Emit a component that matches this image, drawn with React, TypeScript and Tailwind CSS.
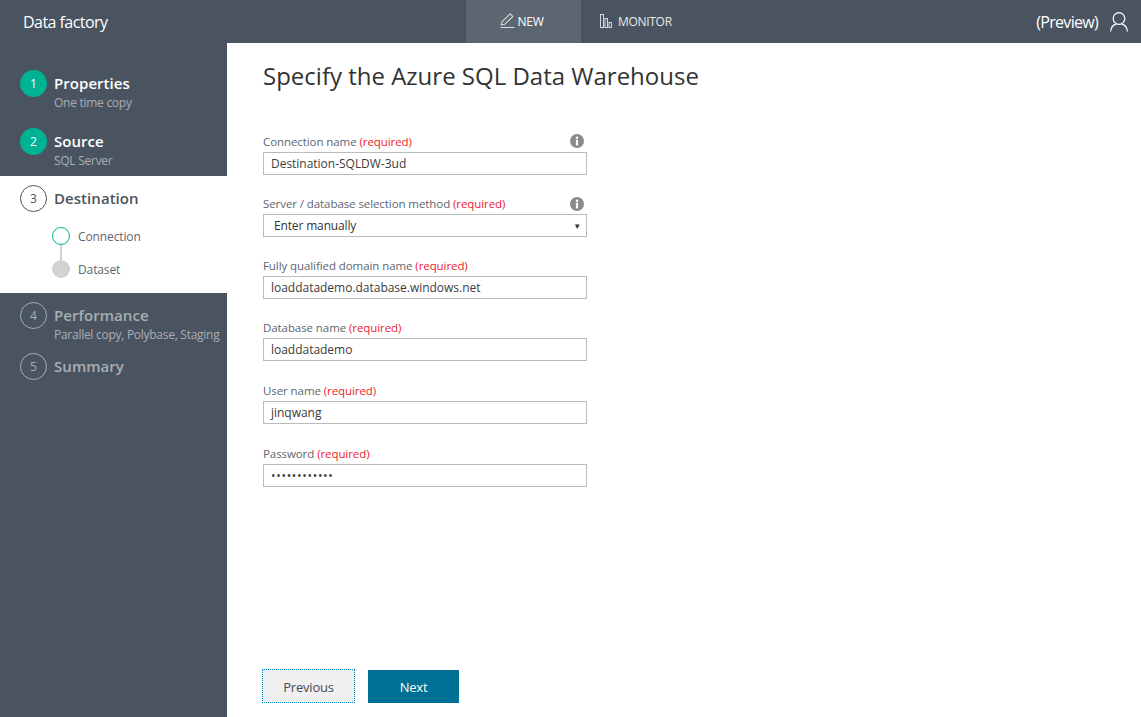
import React from 'react';

const font = { fontFamily: '"Open Sans", "Noto Sans", sans-serif' };

interface StepProps {
    num: number;
    title: string;
    sub?: string;
    state: 'done' | 'active' | 'todo';
    className?: string;
}

const Step: React.FC<StepProps> = ({ num, title, sub, state, className }) => {
    const circle =
        state === 'done'
            ? 'bg-[#00b294] text-white'
            : state === 'active'
              ? 'border border-[#4a5460] text-[#4a5460]'
              : 'border border-[#a9aeb4] text-[#a9aeb4]';
    const titleColor = state === 'done' ? 'text-white' : state === 'active' ? 'text-[#4a5460]' : 'text-[#a9aeb4]';

    return (
        <div className={`flex items-start pl-5 ${className ?? ''}`}>
            <div className={`w-[27px] h-[27px] rounded-full flex items-center justify-center text-[12px] shrink-0 ${circle}`}>
                {num}
            </div>
            <div className="ml-[7px]">
                <div className={`text-[15px] leading-[27px] font-semibold tracking-[0.05px] ${titleColor}`}>{title}</div>
                {sub && <div className="text-[12px] leading-[13px] -mt-[1px] tracking-[-0.27px] whitespace-nowrap text-[#a9aeb4]">{sub}</div>}
            </div>
        </div>
    );
};

const Field: React.FC<{ label: string; info?: boolean; infoClass?: string; className?: string; children: React.ReactNode }> = ({
    label,
    info,
    infoClass,
    className,
    children,
}) => (
    <div className={`w-[324px] ${className ?? ''}`}>
        <div className="flex items-center justify-between h-[20px] pr-[3px]">
            <span className="text-[11.5px] tracking-[-0.08px] text-[#5d6670] whitespace-nowrap">
                {label} <span className="text-[#f01a2e]">(required)</span>
            </span>
            {info && (
                <svg width="14" height="14" viewBox="0 0 14 14" className={infoClass}>
                    <circle cx="7" cy="7" r="7" fill="#8a8a8a" />
                    <circle cx="7" cy="3.7" r="1.3" fill="#fff" />
                    <rect x="5.9" y="5.8" width="2.2" height="5.6" fill="#fff" />
                </svg>
            )}
        </div>
        {children}
    </div>
);

const TextInput: React.FC<{ value: string; className?: string }> = ({ value, className }) => (
    <div className={`h-[23px] border border-[#bbbbbb] pl-[7px] text-[12px] leading-[21px] text-[#3c3c3c] bg-white ${className ?? 'tracking-[-0.02px]'}`}>
        {value}
    </div>
);

export default function App() {
    return (
        <div className="w-[1141px] h-[717px] overflow-hidden flex flex-col bg-white" style={font}>
            {/* Header */}
            <div className="h-[43px] shrink-0 flex bg-[#4a5460] text-white">
                <div className="w-[466px] pl-[23px] text-[16px] leading-[45px] tracking-[-0.55px]">Data factory</div>
                <div className="w-[115px] bg-[#5c6670] flex items-center justify-center text-[12px] tracking-[-0.3px] pr-[4px]">
                    <svg width="15" height="15" viewBox="0 0 14 14" fill="none" stroke="#d5d8db" strokeWidth="1" className="mr-[3px] -mt-[2px]">
                        <path d="M1 11 L2 8 L9.5 0.8 L12 3.2 L4.5 10.5 Z" />
                        <path d="M0.5 13.5 H13.5" />
                    </svg>
                    NEW
                </div>
                <div className="flex items-center pl-[19px] text-[12px] tracking-[-0.3px] text-[#e8eaec]">
                    <svg width="12" height="14" viewBox="0 0 12 14" fill="none" stroke="#d5d8db" strokeWidth="1" className="mr-[6px] -mt-[2px]">
                        <rect x="0.5" y="0.5" width="3" height="13" />
                        <rect x="5" y="4.5" width="2.5" height="9" />
                        <rect x="9" y="8.5" width="2.5" height="5" />
                    </svg>
                    MONITOR
                </div>
                <div className="ml-auto flex items-center pr-[12px]">
                    <span className="text-[16px] tracking-[-0.7px]">(Preview)</span>
                    <svg width="20" height="20" viewBox="0 0 20 20" fill="none" stroke="#fff" strokeWidth="1.2" className="ml-[11px]">
                        <circle cx="10" cy="6.5" r="5.8" />
                        <path d="M1.5 19.5 C2 15 5 12.5 7.5 11.8 M18.5 19.5 C18 15 15 12.5 12.5 11.8" />
                    </svg>
                </div>
            </div>

            <div className="flex-1 flex min-h-0">
                {/* Sidebar */}
                <div className="w-[227px] shrink-0 bg-[#4a5460] pt-[27px]">
                    <Step num={1} title="Properties" sub="One time copy" state="done" className="h-[58px]" />
                    <Step num={2} title="Source" sub="SQL Server" state="done" className="h-[48px]" />
                    <div className="bg-white h-[117px] pt-[9px]">
                        <Step num={3} title="Destination" state="active" />
                        <div className="relative pl-[52px] pt-[15px] flex flex-col gap-[15px]">
                            <div className="flex items-center h-[18px]">
                                <div className="w-[18px] h-[18px] rounded-full border border-[#00b294] bg-white" />
                                <span className="ml-[8px] mt-[2px] text-[12px] tracking-[-0.12px] text-[#5d6670]">Connection</span>
                            </div>
                            <div className="flex items-center h-[18px]">
                                <div className="w-[18px] h-[18px] rounded-full bg-[#d2d2d2]" />
                                <span className="ml-[8px] mt-[2px] text-[12px] tracking-[-0.12px] text-[#5d6670]">Dataset</span>
                            </div>
                            <div className="absolute left-[60px] top-[33px] w-[2px] h-[15px] bg-[#d2d2d2]" />
                        </div>
                    </div>
                    <Step num={4} title="Performance" sub="Parallel copy, Polybase, Staging" state="todo" className="h-[51px] mt-[9px]" />
                    <Step num={5} title="Summary" state="todo" />
                </div>

                {/* Form */}
                <div className="flex-1 flex flex-col pl-9 pt-[15px]">
                    <h1 className="text-[24px] leading-[36px] text-[#333333] mb-[38px]">Specify the Azure SQL Data Warehouse</h1>
                    <Field label="Connection name" info infoClass="-mt-[2px]" className="h-[62px]">
                        <TextInput value="Destination-SQLDW-3ud" />
                    </Field>
                    <Field label="Server / database selection method" info className="h-[62px]">
                        <div className="h-[23px] border border-[#bbbbbb] pl-[10px] pr-[5px] flex items-center justify-between text-[12px] tracking-[-0.15px] text-[#333333]">
                            Enter manually
                            <span className="text-[8px] text-[#333333]">▼</span>
                        </div>
                    </Field>
                    <Field label="Fully qualified domain name" className="h-[62px]">
                        <TextInput value="loaddatademo.database.windows.net" />
                    </Field>
                    <Field label="Database name" className="h-[63px]">
                        <TextInput value="loaddatademo" />
                    </Field>
                    <Field label="User name" className="h-[63px]">
                        <TextInput value="jinqwang" />
                    </Field>
                    <Field label="Password">
                        <TextInput value="••••••••••••" className="tracking-[0.7px]" />
                    </Field>
                    <div className="mt-auto mb-[14px] flex items-end gap-[13px] -ml-[1px]">
                        <button className="w-[93px] h-[34px] pt-[3px] bg-[#f0f0f0] border border-dotted border-[#0084bd] text-[13px] tracking-[-0.2px] text-[#444c58]">
                            Previous
                        </button>
                        <button className="w-[91px] h-[33px] pt-[3px] bg-[#006f94] text-white text-[13px] tracking-[-0.2px]">Next</button>
                    </div>
                </div>
            </div>
        </div>
    );
}
